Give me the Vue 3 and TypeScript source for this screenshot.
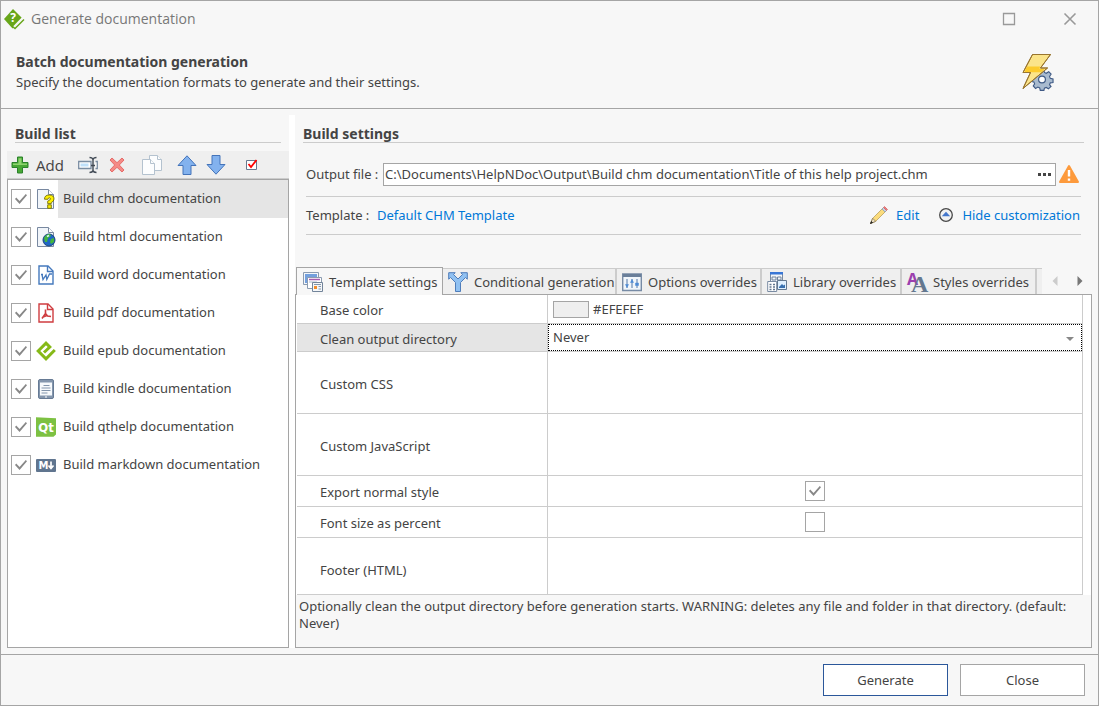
<script setup lang="ts">
import { ref } from 'vue'

interface BuildItem { id: string; label: string; enabled: boolean }

const builds = ref<BuildItem[]>([
  { id: 'chm', label: 'Build chm documentation', enabled: true },
  { id: 'html', label: 'Build html documentation', enabled: true },
  { id: 'word', label: 'Build word documentation', enabled: true },
  { id: 'pdf', label: 'Build pdf documentation', enabled: true },
  { id: 'epub', label: 'Build epub documentation', enabled: true },
  { id: 'kindle', label: 'Build kindle documentation', enabled: true },
  { id: 'qthelp', label: 'Build qthelp documentation', enabled: true },
  { id: 'markdown', label: 'Build markdown documentation', enabled: true },
])
const selected = ref('chm')

const tabs = [
  { id: 'template', label: 'Template settings' },
  { id: 'conditional', label: 'Conditional generation' },
  { id: 'options', label: 'Options overrides' },
  { id: 'library', label: 'Library overrides' },
  { id: 'styles', label: 'Styles overrides' },
]
const activeTab = ref('template')

const outputFile = ref('C:\\Documents\\HelpNDoc\\Output\\Build chm documentation\\Title of this help project.chm')
const baseColor = ref('#efefef')
const cleanMode = ref('Never')
const customCss = ref('')
const customJs = ref('')
const exportNormal = ref(true)
const fontPercent = ref(false)
const footerHtml = ref('')
</script>

<template>
  <div class="window">
    <header class="titlebar">
      <svg class="app-icon" viewBox="0 0 20 20" width="20" height="20">
        <path d="M9 0 18 9 8.500 19.500 0 10z" fill="#68a61a" />
        <path d="M9.500 18 18.500 8.800" fill="none" stroke="#f7f7f7" stroke-width="1.500" />
        <path d="M8.500 17.500 11 19.500 20 10.500" fill="none" stroke="#68a61a" stroke-width="1.500" />
        <text x="9" y="13" text-anchor="middle" class="q-light">?</text>
      </svg>
      <span class="caption">Generate documentation</span>
      <button class="win-btn" type="button" aria-label="Maximize">
        <svg viewBox="0 0 14 14" width="14" height="14"><path d="M1.500 1.500h11v11h-11z" fill="none" stroke="#999" stroke-width="1.300" /></svg>
      </button>
      <button class="win-btn" type="button" aria-label="Close window">
        <svg viewBox="0 0 14 14" width="14" height="14"><path d="M1.500 1.500 12.500 12.500M12.500 1.500 1.500 12.500" stroke="#999" stroke-width="1.600" /></svg>
      </button>
    </header>

    <section class="intro">
      <div>
        <h1>Batch documentation generation</h1>
        <p>Specify the documentation formats to generate and their settings.</p>
      </div>
      <svg viewBox="0 0 32 38" width="32" height="38">
        <g transform="translate(20 26.500)">
          <path d="M-2-10h4l.6 3 2 .9 2.700-1.700 2.600 2.600-1.700 2.600.8 2 3 .6v4l-3 .3-.8 2 1.600 2-2.800 2.500-2.400-1.500-2 .8-.5 2.400h-4l-.6-2.700-2-.9-2.500 1.500-2.500-2.700 1.500-2.300-.8-2.100-2.600-.5v-3.600l2.700-.6.9-2-1.600-2.500 2.600-2.600 2.500 1.700 2-.9z" transform="translate(0 -.6) scale(.92)" fill="#a9bbcf" stroke="#3f5a85" stroke-width="1.200" />
          <circle r="3.400" fill="#fff" stroke="#3f5a85" stroke-width="1.200" />
        </g>
        <path d="M10.500 1.500H28.500L18.500 15H25.500L1 35.500 8.500 19.500H1z" fill="#fbe48a" stroke="#99752f" stroke-linejoin="round" />
        <path d="M5 13.500H18L17.500 16H22.500L19 19.200H10.500L9 19H2.500z" fill="#fccb2d" />
        <path d="M10.500 1.500H28.500L18.500 15H25.500L1 35.500 8.500 19.500H1z" fill="none" stroke="#99752f" stroke-linejoin="round" />
      </svg>
    </section>

    <main class="body">
      <section class="builds">
        <h2>Build list</h2>
        <div class="toolbar">
          <button type="button" class="tool add">
            <svg viewBox="0 0 18 18" width="18" height="18"><path d="M6.500 1h5v5.500H17v5h-5.500V17h-5v-5.500H1v-5h5.500z" fill="#48a835" stroke="#2a812b" /><path d="M7.500 2.200h3v5.300H16v1.500H2V7.500h5.500z" fill="#8ed36f" /></svg>
            <span>Add</span>
          </button>
          <button type="button" class="tool rename" aria-label="Rename">
            <svg viewBox="0 0 20 18" width="20" height="18"><path d="M.7 5.500H13v7H.7zM17.500 5.500h1.800v7h-1.800" fill="#fff" stroke="#7a8da2" stroke-width="1.300" /><path d="M2.500 7.500h8v3h-8z" fill="#bfe0fa" /><path d="M11.500 1.500q3 0 3.500 2 .5-2 3.500-2M15 3v12M11.500 16.500q3 0 3.500-2 .5 2 3.500 2M13 9.500h4" fill="none" stroke="#414a55" stroke-width="1.400" /></svg>
          </button>
          <button type="button" class="tool delete" aria-label="Delete">
            <svg viewBox="0 0 16 16" width="16" height="16"><path d="M1 3 3 1l5 4.700L13 1l2 2-4.700 5L15 13l-2 2-5-4.700L3 15l-2-2 4.700-5z" fill="#f58a86" stroke="#e56c6a" /></svg>
          </button>
          <button type="button" class="tool copy" aria-label="Duplicate">
            <svg viewBox="0 0 20 20" width="20" height="20"><g fill="#fcfdfe" stroke="#b4c2cf"><path d="M7.500.5h8l4 4v11h-12z" /><path d="M15.500.5v4h4" /><path d="M.5 4.500h8l4 4v11H.5z" /><path d="M8.500 4.500v4h4" /></g></svg>
          </button>
          <button type="button" class="tool up" aria-label="Move up">
            <svg viewBox="0 0 20 20" width="20" height="20"><path d="M10 .8 19 10.500h-5v9H6v-9H1z" fill="#83b2ee" stroke="#4474ba" /></svg>
          </button>
          <button type="button" class="tool down" aria-label="Move down">
            <svg viewBox="0 0 20 20" width="20" height="20"><path d="M10 19.200 19 9.500h-5v-9H6v9H1z" fill="#83b2ee" stroke="#4474ba" /></svg>
          </button>
          <button type="button" class="tool check-all" aria-label="Check all">
            <svg viewBox="0 0 12 12" width="12" height="12"><path d="M.5 1.500h10v9H.5z" fill="#fff" stroke="#68788e" /><path d="M2.500 5 5 8 10.500 1" fill="none" stroke="#f00" stroke-width="1.800" /></svg>
          </button>
        </div>
        <ul class="list">
          <li v-for="b in builds" :key="b.id" @click="selected = b.id">
            <input :id="'build-' + b.id" v-model="b.enabled" class="check" type="checkbox" />
            <svg class="fmt" viewBox="0 0 20 20" width="20" height="20" aria-hidden="true">
              <template v-if="b.id === 'chm'">
                <path d="M1.500.5h11l5 5v14h-16z" fill="#f0f4f9" stroke="#7888a0" /><path d="M12.500.5v5h5" fill="#fff" stroke="#7888a0" />
                <path d="M8.500 10.200q0-4.200 4.800-4.200 4.700 0 4.700 4 0 2.300-2.700 3.600v1h-3.600v-2.400q3-1.300 2.800-2.500-.2-.9-1.200-.9-1.200 0-1.400 1.500zM11.700 15.800h3.600v3.500h-3.600z" fill="#fdf000" stroke="#766f00" stroke-width=".9" />
              </template>
              <template v-else-if="b.id === 'html'">
                <path d="M1.500.5h11l5 5v14h-16z" fill="#f0f4f9" stroke="#7888a0" /><path d="M12.500.5v5h5" fill="#fff" stroke="#7888a0" />
                <circle cx="13" cy="13" r="6" fill="#1f66c4" stroke="#19437f" /><path d="M8 11q2-4 6-4l1 2-3 2-1 4-2 0zM15 12l3-1v4l-3 2-1-2z" fill="#43b63c" /><path d="M11 9.500l2-1" stroke="#d8f3ff" stroke-width="1.500" />
              </template>
              <template v-else-if="b.id === 'word'">
                <path d="M3 1h9l5 5v13H3z" fill="#fff" stroke="#4579bd" stroke-width="1.400" /><path d="M11.500 1v5.500H17" fill="none" stroke="#4579bd" stroke-width="1.400" />
                <path d="M5 9.500h2M6 9.500l1 5 3-4.500.8 4.500L13.500 9H16" fill="none" stroke="#4579bd" stroke-width="1.300" />
              </template>
              <template v-else-if="b.id === 'pdf'">
                <path d="M3 1h9l5 5v13H3z" fill="#fff" stroke="#cf3d40" stroke-width="1.400" /><path d="M11.500 1v5.500H17" fill="none" stroke="#cf3d40" stroke-width="1.400" />
                <path d="M9.500 6.500v4L6 15.500M9.500 10.500l2 2.500 3.500.5M7 14l4-1.500" fill="none" stroke="#cf3d40" stroke-width="1.600" />
              </template>
              <template v-else-if="b.id === 'epub'">
                <path d="M8 11.500 13.800 6 10 2.200 2.200 10 10 17.800 18.800 9" fill="none" stroke="#86b918" stroke-width="3" />
              </template>
              <template v-else-if="b.id === 'kindle'">
                <rect x="2.500" y=".5" width="15" height="19" rx="1.500" fill="#8496ad" stroke="#667a94" /><path d="M4 3.500h12v13H4z" fill="#f7fafc" /><path d="M7.500 6.500h6M5.500 9h9M5.500 11.500h9M5.500 14h6" stroke="#8496ad" /><path d="M9 18h2" stroke="#fff" />
              </template>
              <template v-else-if="b.id === 'qthelp'">
                <path d="M0 .3 20 1.300V17.500L17.500 19.700H0z" fill="#7dc142" /><text x="10" y="14.500" text-anchor="middle" class="qt">Qt</text>
              </template>
              <template v-else>
                <rect x="0" y="4" width="20" height="13" rx="1" fill="#60758f" /><text x="7.500" y="14" text-anchor="middle" class="md">M</text><path d="M15 6.500v6M12.500 10.500 15 13.500l2.500-3" fill="none" stroke="#fff" stroke-width="1.700" />
              </template>
            </svg>
            <label :for="'build-' + b.id" :class="{ selected: selected === b.id }">{{ b.label }}</label>
          </li>
        </ul>
      </section>

      <div class="splitter"></div>

      <section class="settings">
        <h2>Build settings</h2>
        <div class="fields">
          <div class="row output">
            <label for="output">Output file :</label>
            <div class="path-box">
              <input id="output" v-model="outputFile" type="text" />
              <button type="button" aria-label="Browse"><svg viewBox="0 0 13 3" width="13" height="3"><path d="M0 0h3v3H0zM5 0h3v3H5zM10 0h3v3h-3z" fill="#444" /></svg></button>
            </div>
            <svg viewBox="0 0 20 18" width="20" height="18"><path d="M10 1 19 17H1z" fill="#fd9a3c" stroke="#fd9a3c" stroke-width="2" stroke-linejoin="round" /><path d="M8.800 5h2.400v6.500H8.800zM8.800 13.500h2.400v2.300H8.800z" fill="#fff" /></svg>
          </div>
          <div class="row template">
            <span>Template :</span>
            <a href="#" class="name">Default CHM Template</a>
            <a href="#" class="edit">
              <svg viewBox="0 0 18 18" width="18" height="18"><path d="M.5 17.500 2.500 12.500 12.500 2.500 15.500 5.500 5.500 15.500z" fill="#fbdc7c" stroke="#b89f60" stroke-width=".8" /><path d="M2.700 12.300 5.700 15.300.5 17.500z" fill="#efe3c8" stroke="#78684a" stroke-width=".7" /><path d="M12 3 13.500 1.500 16.500 4.500 15 6z" fill="#c5d4e6" stroke="#8598ae" stroke-width=".7" /><path d="M13.500 1.500 14.500.5 17.500 3.500 16.500 4.500z" fill="#ee7c7c" stroke="#d46a6a" stroke-width=".8" /><path d="M.5 17.500 1.500 15.500 2.500 16.500z" stroke="#333" /></svg>
              Edit</a>
            <a href="#" class="hide">
              <svg viewBox="0 0 14 14" width="14" height="14"><circle cx="7" cy="7" r="6.300" fill="#f2f2f2" stroke="#484848" stroke-width="1.300" /><path d="M2.800 8.300 7 3.800l4.200 4.500z" fill="#4477cc" /></svg>
              Hide customization</a>
          </div>
        </div>

        <div class="tab-strip">
          <div class="tabs" role="tablist">
            <button v-for="t in tabs" :key="t.id" type="button" role="tab" :aria-selected="activeTab === t.id" :class="['tab', { active: activeTab === t.id }]" @click="activeTab = t.id">
              <svg viewBox="0 0 20 20" width="20" height="20" aria-hidden="true">
                <template v-if="t.id === 'template'">
                  <path d="M.5.500h15v12H.5z" fill="#f4f7fa" stroke="#8b9bb0" /><path d="M2 2h12v9H2z" fill="#73a0de" /><path d="M4.500 5.500h14v11h-14z" fill="#fff" stroke="#8b9bb0" /><path d="M6 7.500h11" stroke="#a75bb0" stroke-width="1.500" /><path d="M6 10h8" stroke="#a9b8ca" />
                  <path d="M9.500 10.500h10v9h-10z" fill="#f5f7f9" stroke="#72849a" /><path d="M11 14h3v3h-3z" fill="#f28b2b" /><path d="M11 12.500h7M15.500 14.500h2.500M15.500 17h2.500" stroke="#8496ad" />
                </template>
                <template v-else-if="t.id === 'conditional'">
                  <path d="M.7.7h6.500L5.500 2.500 10 7l4.500-4.500L12.800.7h6.500v6.500L17.500 5.500 12.500 10.500v9h-5v-9L2.500 5.500.7 7.200z" fill="#90c1f2" stroke="#4f7dba" />
                </template>
                <template v-else-if="t.id === 'options'">
                  <path d="M.7 2h18.600v16.500H.7z" fill="#f1f6fb" stroke="#778ba5" stroke-width="1.400" /><path d="M1 2h18v3H1z" fill="#6a7f9a" /><path d="M5 7v9M10 7v9M15 7v9" stroke="#5276a6" /><path d="M3.500 12.500h3L5 15.500zM8.500 10.500h3L10 7.500zM13.500 11h3v2.500h-3z" fill="#4d8ad5" stroke="#4d8ad5" stroke-width=".5" />
                </template>
                <template v-else-if="t.id === 'library'">
                  <path d="M3.500.5h12v15h-12z" fill="#f2f5f8" stroke="#798ba2" /><path d="M3 0h13v2.500H3z" fill="#3876d6" /><path d="M5 5h4v3H5zM10.500 5h3.500v3h-3.500z" fill="none" stroke="#6e829d" />
                  <path d="M.7 9.500h9v10h-9z" fill="#fff" stroke="#798ba2" /><path d="M2.500 12.500h2M6 12.500h2M2.500 15h2M6 15h2M2.500 17.500h2M6 17.500h2" stroke="#64778f" stroke-width="1.300" /><path d="M10.500 8.500h9v9h-9z" fill="#dff0ff" stroke="#64788f" /><path d="M12 15l3-3 1.500 1.500L18 12.500V16h-6z" fill="#386fae" />
                </template>
                <template v-else>
                  <text x="0" y="13" class="a-sans">A</text><text x="4" y="20" class="a-serif">A</text>
                </template>
              </svg>
              {{ t.label }}
            </button>
            <span class="tab-rest"></span>
          </div>
          <button type="button" class="scroll" aria-label="Previous tabs"><svg viewBox="0 0 6 10" width="6" height="10"><path d="M5.500 0v10L.5 5z" fill="#ccc" /></svg></button>
          <button type="button" class="scroll next" aria-label="Next tabs"><svg viewBox="0 0 6 10" width="6" height="10"><path d="M.5 0v10l5-5z" fill="#777" /></svg></button>
        </div>

        <div class="panel">
          <div class="grid-area">
            <table>
              <tbody>
                <tr class="h28">
                  <th scope="row"><label for="base">Base color</label></th>
                  <td><div class="color"><input id="base" v-model="baseColor" type="color" /><span>{{ baseColor.toUpperCase() }}</span></div></td>
                </tr>
                <tr class="h28 current">
                  <th scope="row"><label for="clean">Clean output directory</label></th>
                  <td>
                    <div class="combo">
                      <select id="clean" v-model="cleanMode"><option>Never</option><option>Always</option></select>
                      <svg viewBox="0 0 8 4" width="8" height="4"><path d="M0 0h8L4 4z" fill="#888" /></svg>
                    </div>
                  </td>
                </tr>
                <tr class="h62">
                  <th scope="row"><label for="css">Custom CSS</label></th>
                  <td><textarea id="css" v-model="customCss"></textarea></td>
                </tr>
                <tr class="h62">
                  <th scope="row"><label for="js">Custom JavaScript</label></th>
                  <td><textarea id="js" v-model="customJs"></textarea></td>
                </tr>
                <tr class="h31">
                  <th scope="row"><label for="normal">Export normal style</label></th>
                  <td class="center"><input id="normal" v-model="exportNormal" class="check" type="checkbox" /></td>
                </tr>
                <tr class="h31">
                  <th scope="row"><label for="percent">Font size as percent</label></th>
                  <td class="center"><input id="percent" v-model="fontPercent" class="check" type="checkbox" /></td>
                </tr>
                <tr class="h57">
                  <th scope="row"><label for="footer">Footer (HTML)</label></th>
                  <td><textarea id="footer" v-model="footerHtml"></textarea></td>
                </tr>
              </tbody>
            </table>
          </div>
          <p class="hint">Optionally clean the output directory before generation starts. WARNING: deletes any file and folder in that directory. (default: Never)</p>
        </div>
      </section>
    </main>

    <footer class="actions">
      <button type="button" class="primary">Generate</button>
      <button type="button">Close</button>
    </footer>
  </div>
</template>

<style>
body { margin: 0; }
</style>

<style scoped>
* { box-sizing: border-box; }
.window {
  min-height: 100vh;
  display: flex;
  flex-direction: column;
  border: 1px solid #a5a5a5;
  background: #f7f7f7;
  color: #444;
  font: 13px/17px "Noto Sans", sans-serif;
}
h1, h2, p, ul { margin: 0; padding: 0; }
button, input, select, textarea { font: inherit; color: inherit; margin: 0; padding: 0; border: 0; background: none; border-radius: 0; }
svg { display: block; flex: none; overflow: visible; }
a { color: #0078d7; text-decoration: none; }

.titlebar { display: flex; align-items: center; height: 36px; padding: 0 18px 0 3px; }
.caption { flex: 1; margin-left: 7px; color: #777; font: 14px/20px "Open Sans", sans-serif; }
.win-btn { width: 20px; height: 20px; display: grid; place-items: center; margin-left: 41px; }
.q-light { font: bold 12px "Open Sans", sans-serif; fill: #fff; }

.intro { display: flex; justify-content: space-between; height: 72px; padding: 16px 44px 0 15px; border-bottom: 1px solid #a5a5a5; }
h1, h2 { font: bold 14px/17px "Noto Sans", sans-serif; }
.intro p { margin-top: 4px; }

.body { flex: 1; display: grid; grid-template-columns: 282px 6px 1fr; padding: 6px; }
.builds, .settings { display: flex; flex-direction: column; min-width: 0; }
.splitter { background: #fff; }
h2 { margin: 0 8px; padding-top: 10px; border-bottom: 1px solid #ccc; height: 28px; }

.toolbar { display: flex; align-items: center; height: 28px; margin-top: 8px; padding-left: 4px; background: #efefef; border-bottom: 1px solid #ccc; }
.tool { display: flex; align-items: center; }
.add { font: 15px/20px "Open Sans", sans-serif; width: 67px; gap: 7px; }
.rename { width: 31px; }
.delete { width: 33px; }
.copy { width: 35px; }
.up { width: 29px; }
.down { width: 40px; }

.list { flex: 1; list-style: none; background: #fff; border: 1px solid #a5a5a5; }
.list li { display: flex; align-items: center; height: 38px; padding-left: 3px; }
.list label { flex: 1; align-self: stretch; padding: 10px 0 0 5px; margin-left: 2px; }
.list label.selected { background: #e5e5e5; }
.fmt { margin-left: 5px; }
.check { appearance: none; flex: none; width: 20px; height: 20px; border: 1px solid #a5a5a5; background: #fff; display: grid; place-items: center; }
.check:checked::before { content: ""; width: 12px; height: 10px; background: #888; clip-path: polygon(0 50%, 10% 36%, 38% 70%, 90% 0, 100% 12%, 38% 100%); }
.qt { font: bold 13px "DejaVu Sans Condensed", sans-serif; fill: #fff; }
.md { font: bold 10px "DejaVu Sans", sans-serif; fill: #fff; }

.fields { margin: 0 11px; }
.row { display: flex; align-items: center; border-bottom: 1px solid #ccc; }
.output { height: 54px; padding: 9px 2px 0 0; }
.output label { width: 77px; white-space: nowrap; }
.path-box { flex: 1; display: flex; align-items: center; height: 23px; border: 1px solid #a5a5a5; background: #fff; margin-right: 3px; }
.path-box input { flex: 1; min-width: 0; padding: 0 1px; height: 21px; outline: 0; }
.path-box button { padding: 0 4px; }
.template { height: 38px; padding-bottom: 1px; }
.template > span { width: 71px; white-space: nowrap; }
.name { flex: 1; }
.edit, .hide { display: flex; align-items: center; }
.edit { gap: 8px; }
.hide { gap: 9px; margin-left: 20px; margin-right: 1px; }

.tab-strip { display: flex; align-items: flex-end; height: 28px; margin-top: 32px; margin-bottom: -1px; position: relative; padding-left: 1px; }
.tabs { display: grid; grid-template-columns: 147px 174px 145px 140px 135px 5px; align-items: end; flex: 1; height: 28px; }
.tab { display: flex; align-items: center; gap: 6px; height: 26px; margin-bottom: 1px; padding: 1px 0 0 5px; background: #efefef; border-top: 1px solid #ccc; border-right: 2px solid #ccc; white-space: nowrap; }
.tab.active { height: 28px; margin: 0; padding: 1px 0 0 6px; background: #f7f7f7; border: 1px solid #a5a5a5; border-bottom: 0; }
.tab-rest { height: 26px; margin-bottom: 1px; background: #efefef; border-top: 1px solid #ccc; }
.scroll { width: 12px; height: 28px; display: grid; place-items: center; }
.scroll.next { margin: 0 6px 0 13px; }
.a-sans { font: bold 16px "Noto Sans", sans-serif; fill: #9b3fae; }
.a-serif { font: bold 24px "Liberation Serif", serif; fill: #64788f; }

.panel { flex: 1; border: 1px solid #a5a5a5; }
.grid-area { background: #fff; padding: 0 8px 0 1px; }
table { width: 100%; border-collapse: separate; border-spacing: 0; table-layout: fixed; }
th, td { padding: 0; border: 0 solid #ccc; border-width: 0 1px 1px 0; vertical-align: middle; }
th { width: 251px; padding: 3px 0 0 23px; text-align: left; font-weight: normal; }
.current th { background: #e5e5e5; }
.h28 td, .h28 th { height: 28px; }
.h28:first-child td, .h28:first-child th { height: 29px; }
.h31 td, .h31 th { height: 31px; }
.h57 td, .h57 th { height: 57px; }
.h57 th { padding-top: 8px; }
.h62 td, .h62 th { height: 62px; }
.color { display: flex; align-items: center; gap: 4px; padding-left: 5px; }
.color input { appearance: none; width: 36px; height: 17px; border: 1px solid #a5a5a5; }
.color input::-webkit-color-swatch-wrapper { padding: 0; }
.color input::-webkit-color-swatch { border: 0; }
.combo { position: relative; height: 27px; border: 1px dotted #000; }
.combo select { appearance: none; width: 100%; height: 25px; padding-left: 4px; outline: 0; }
.combo svg { position: absolute; right: 7px; top: 12px; pointer-events: none; }
textarea { display: block; width: 100%; height: 40px; resize: none; outline: 0; }
.center .check { margin: 0 auto; }
.hint { padding: 3px 3px 0; }

.actions { display: flex; justify-content: flex-end; gap: 12px; height: 51px; padding: 9px 13px 0; border-top: 1px solid #a5a5a5; }
.actions button { width: 125px; height: 32px; background: #fff; border: 1px solid #a5a5a5; }
.actions .primary { border-color: #2b579a; }
</style>
